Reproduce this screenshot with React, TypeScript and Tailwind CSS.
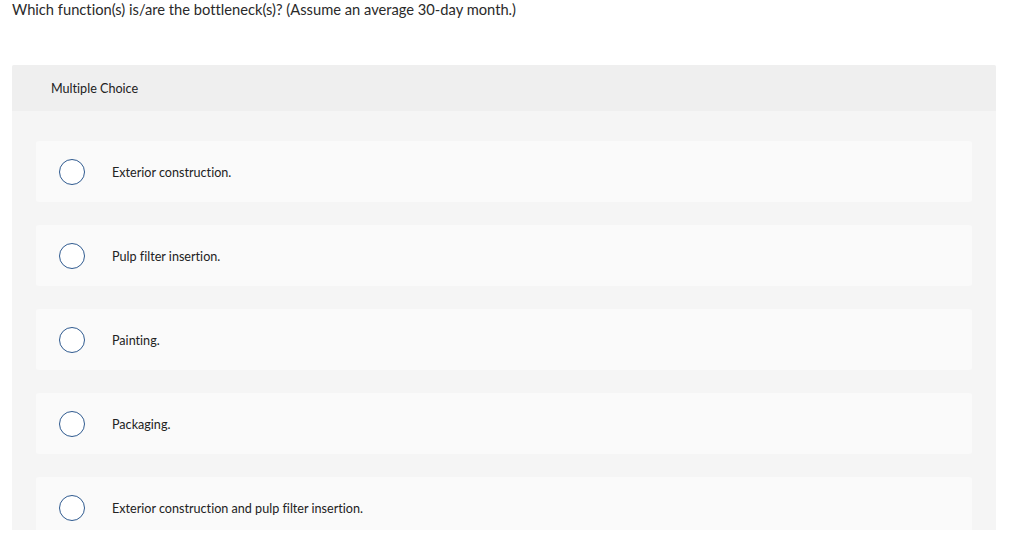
import React from "react";

const options = [
  "Exterior construction.",
  "Pulp filter insertion.",
  "Painting.",
  "Packaging.",
  "Exterior construction and pulp filter insertion.",
];

export default function App() {
  return (
    <div
      className="h-[534px] w-[1024px] overflow-hidden bg-white text-[#333333] [font-variant-ligatures:none]"
      style={{ fontFamily: "Lato, 'Open Sans', sans-serif" }}
    >
      <div className="px-3 text-[14.7px] leading-[18px] text-[#2a2a2a]">
        Which function(s) is/are the bottleneck(s)? (Assume an average 30-day month.)
      </div>
      <div className="ml-3 mt-[47px] h-[465px] w-[984px] overflow-hidden rounded-t-[2px] bg-[#f5f5f5]">
        <div className="flex h-[46px] items-center bg-[#efefef] pl-[39px] pt-[2px] text-[12.6px] text-[#222]">
          Multiple Choice
        </div>
        <div className="flex flex-col gap-[23px] px-6 pt-[30px]">
          {options.map((o) => (
            <div
              key={o}
              className="flex h-[61px] shrink-0 items-center rounded-[3px] bg-[#fafafa] pl-[23px]"
            >
              <div className="h-[26px] w-[26px] shrink-0 rounded-full border border-[#2f5a8f] bg-white" />
              <div className="ml-[27px] pt-[3px] text-[12.6px] text-[#222]">{o}</div>
            </div>
          ))}
        </div>
      </div>
    </div>
  );
}
